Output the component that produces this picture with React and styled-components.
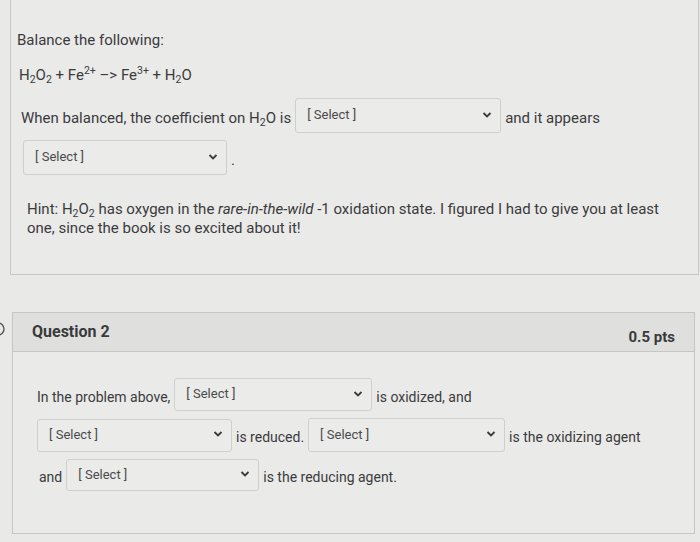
import React from "react";
import styled, { createGlobalStyle } from "styled-components";

const Global = createGlobalStyle`
  html, body { margin: 0; padding: 0; background: #e9e9e7; }
  body { font-family: Roboto, "Liberation Sans", sans-serif; color: #3b3b3d; }
`;

const Page = styled.div`
  width: 700px;
  height: 542px;
  overflow: hidden;
  position: relative;
  background: #e9e9e7;
  display: flex;
  flex-direction: column;
`;

const Card = styled.section`
  box-sizing: border-box;
  margin: ${(p) => p.$margin};
  height: ${(p) => p.$height}px;
  border: 1px solid #c6c6c4;
  background: #eaeae8;
`;

const Q1Body = styled.div`
  padding: 29px 0 0 6px;
  display: flex;
  flex-direction: column;
`;

const Heading = styled.p`
  margin: 0;
  font-size: 15px;
  line-height: 22px;
`;

const Equation = styled.p`
  margin: 13px 0 0 2px;
  font-size: 15px;
  line-height: 22px;
`;

const Line = styled.div`
  display: flex;
  align-items: center;
  font-size: 15px;
  white-space: pre;
  margin-top: ${(p) => p.$mt}px;
  padding-left: ${(p) => p.$pl}px;
`;

const Label = styled.span`
  padding: 4px 4px 0;
`;

const Select = styled.div`
  box-sizing: border-box;
  width: ${(p) => p.$w}px;
  height: ${(p) => p.$h}px;
  border: 1px solid #cfcfcd;
  border-radius: 3px;
  background: #ebebe9;
  display: flex;
  align-items: center;
  justify-content: space-between;
  padding: 0 8px 2px 11px;
  font-size: 13px;
  color: #4a4a4c;
  flex-shrink: 0;
`;

const Chevron = styled.svg`
  width: 10px;
  height: 8px;
`;

const Hint = styled.p`
  margin: 25px 0 0 10px;
  font-size: 15px;
  line-height: 19px;
  width: 640px;
  color: #3b3b3d;
`;

const Header = styled.header`
  box-sizing: border-box;
  height: 39px;
  background: #dfdfdd;
  border-bottom: 1px solid #c6c6c4;
  display: flex;
  align-items: center;
  justify-content: space-between;
  padding: 0 19px;
`;

const QTitle = styled.h2`
  margin: 0 0 2px;
  font-size: 16px;
  font-weight: 700;
  color: #3a3a3c;
`;

const Pts = styled.span`
  font-size: 15px;
  font-weight: 700;
  color: #3a3a3c;
  padding-top: 10px;
`;

const Q2Body = styled.div`
  padding: 26px 0 0 20px;
  display: flex;
  flex-direction: column;
  gap: 7px;
`;

const Row = styled.div`
  display: flex;
  align-items: center;
  font-size: 14px;
  white-space: pre;
  padding-left: ${(p) => p.$pl}px;
`;

const Indicator = styled.svg`
  position: absolute;
  left: -6px;
  top: 321px;
  width: 14px;
  height: 16px;
`;

const Sub = styled.sub`
  font-size: 0.7em;
  vertical-align: baseline;
  position: relative;
  top: 0.3em;
  line-height: 0;
`;
const Sup = styled.sup`
  font-size: 0.7em;
  vertical-align: baseline;
  position: relative;
  top: -0.55em;
  line-height: 0;
`;

const Caret = () => (
  <Chevron viewBox="0 0 10 8">
    <polyline points="1.5,2 5,5.5 8.5,2" fill="none" stroke="#3a3a3c" strokeWidth="1.8" />
  </Chevron>
);

const Sel = ({ w, h }) => (
  <Select $w={w} $h={h}>
    <span>[ Select ]</span>
    <Caret />
  </Select>
);

export default function App() {
  return (
    <Page>
      <Global />
      <Card $margin="-1px 1px 0 10px" $height={276}>
        <Q1Body>
          <Heading>Balance the following:</Heading>
          <Equation>
            H<Sub>2</Sub>O<Sub>2</Sub> + Fe<Sup>2+</Sup> –&gt; Fe<Sup>3+</Sup> + H<Sub>2</Sub>O
          </Equation>
          <Line $mt={12} $pl={0}>
            <Label>
              When balanced, the coefficient on H<Sub>2</Sub>O is
            </Label>
            <Sel w={206} h={35} />
            <Label>and it appears</Label>
          </Line>
          <Line $mt={7} $pl={6}>
            <Sel w={204} h={35} />
            <Label>.</Label>
          </Line>
          <Hint>
            Hint: H<Sub>2</Sub>O<Sub>2</Sub> has oxygen in the <i>rare-in-the-wild</i> -1 oxidation state. I
            figured I had to give you at least one, since the book is so excited about it!
          </Hint>
        </Q1Body>
      </Card>
      <Indicator viewBox="0 0 14 16">
        <path d="M4 2 A6 6 0 0 1 4 14" fill="none" stroke="#555" strokeWidth="1.4" />
      </Indicator>
      <Card $margin="37px 5px 0 12px" $height={222}>
        <Header>
          <QTitle>Question 2</QTitle>
          <Pts>0.5 pts</Pts>
        </Header>
        <Q2Body>
          <Row $pl={0}>
            <Label>In the problem above,</Label>
            <Sel w={198} h={33} />
            <Label>is oxidized, and</Label>
          </Row>
          <Row $pl={4}>
            <Sel w={195} h={33} />
            <Label>is reduced.</Label>
            <Sel w={197} h={34} />
            <Label>is the oxidizing agent</Label>
          </Row>
          <Row $pl={2}>
            <Label>and</Label>
            <Sel w={193} h={32} />
            <Label>is the reducing agent.</Label>
          </Row>
        </Q2Body>
      </Card>
    </Page>
  );
}
